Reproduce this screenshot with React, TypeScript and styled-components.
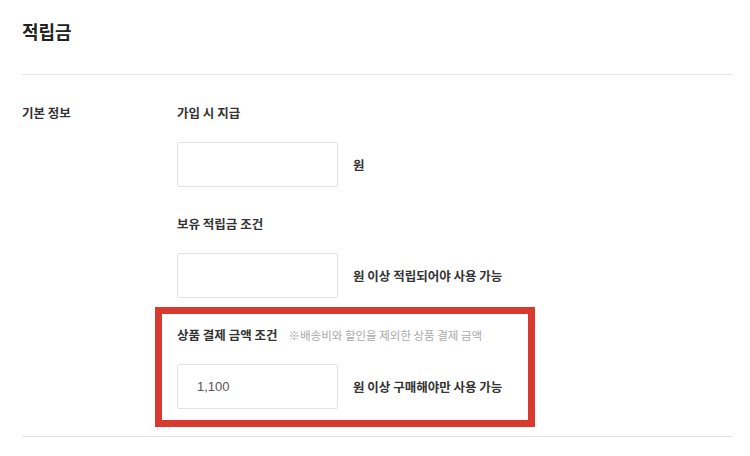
import React from 'react';
import styled, { createGlobalStyle } from 'styled-components';

const GlobalStyle = createGlobalStyle`
  body {
    margin: 0;
    background: #fff;
    font-family: "Noto Sans CJK KR", "Noto Sans", sans-serif;
    color: #333;
  }
`;

const Page = styled.div`
  width: 750px;
  height: 456px;
  padding: 0 17px 0 22px;
  box-sizing: border-box;
  overflow: hidden;
`;

const Header = styled.div`
  height: 75px;
  border-bottom: 1px solid #e4e4e4;
  box-sizing: border-box;
  padding-top: 19px;
`;

const Title = styled.h1`
  margin: 0;
  font-size: 18px;
  line-height: 24px;
  font-weight: 700;
  color: #222;
`;

const Section = styled.div`
  display: flex;
  padding: 28px 0 27px;
  border-bottom: 1px solid #e4e4e4;
`;

const SectionLabel = styled.div`
  width: 155px;
  flex-shrink: 0;
  font-size: 12.5px;
  line-height: 20px;
  font-weight: 700;
  color: #333;
`;

const Fields = styled.div`
  display: flex;
  flex-direction: column;
  gap: 27px;
`;

const FieldGroup = styled.div`
  position: relative;
  display: flex;
  flex-direction: column;
  gap: 19px;
`;

const Highlight = styled.div`
  position: absolute;
  left: -22px;
  top: -18px;
  width: 380px;
  bottom: -18px;
  border: 7px solid #d93a2f;
  box-sizing: border-box;
  pointer-events: none;
`;

const FieldLabel = styled.div`
  display: flex;
  align-items: baseline;
  gap: 11px;
  font-size: 12.5px;
  line-height: 20px;
  font-weight: 700;
  color: #333;
`;

const Note = styled.span`
  font-size: 11.5px;
  font-weight: 400;
  color: #aaa;
`;

const InputRow = styled.div`
  display: flex;
  align-items: center;
  gap: 15px;
`;

const Input = styled.input`
  width: 161px;
  height: 45px;
  box-sizing: border-box;
  border: 1px solid #e2e2e2;
  border-radius: 2px;
  padding: 0 19px;
  font-family: "Liberation Sans", Arial, sans-serif;
  font-size: 13px;
  color: #555;
  outline: none;
`;

const Unit = styled.span`
  font-size: 12.5px;
  font-weight: 700;
  color: #333;
`;

const fields = [
  { label: '가입 시 지급', value: '', unit: '원' },
  { label: '보유 적립금 조건', value: '', unit: '원 이상 적립되어야 사용 가능' },
  {
    label: '상품 결제 금액 조건',
    note: '※배송비와 할인을 제외한 상품 결제 금액',
    value: '1,100',
    unit: '원 이상 구매해야만 사용 가능',
    highlight: true,
  },
];

const App: React.FC = () => {
  return (
    <Page>
      <GlobalStyle />
      <Header>
        <Title>적립금</Title>
      </Header>
      <Section>
        <SectionLabel>기본 정보</SectionLabel>
        <Fields>
          {fields.map((f) => (
            <FieldGroup key={f.label}>
              <FieldLabel>
                {f.label}
                {f.note && <Note>{f.note}</Note>}
              </FieldLabel>
              <InputRow>
                <Input defaultValue={f.value} />
                <Unit>{f.unit}</Unit>
              </InputRow>
              {f.highlight && <Highlight />}
            </FieldGroup>
          ))}
        </Fields>
      </Section>
    </Page>
  );
};

export default App;
